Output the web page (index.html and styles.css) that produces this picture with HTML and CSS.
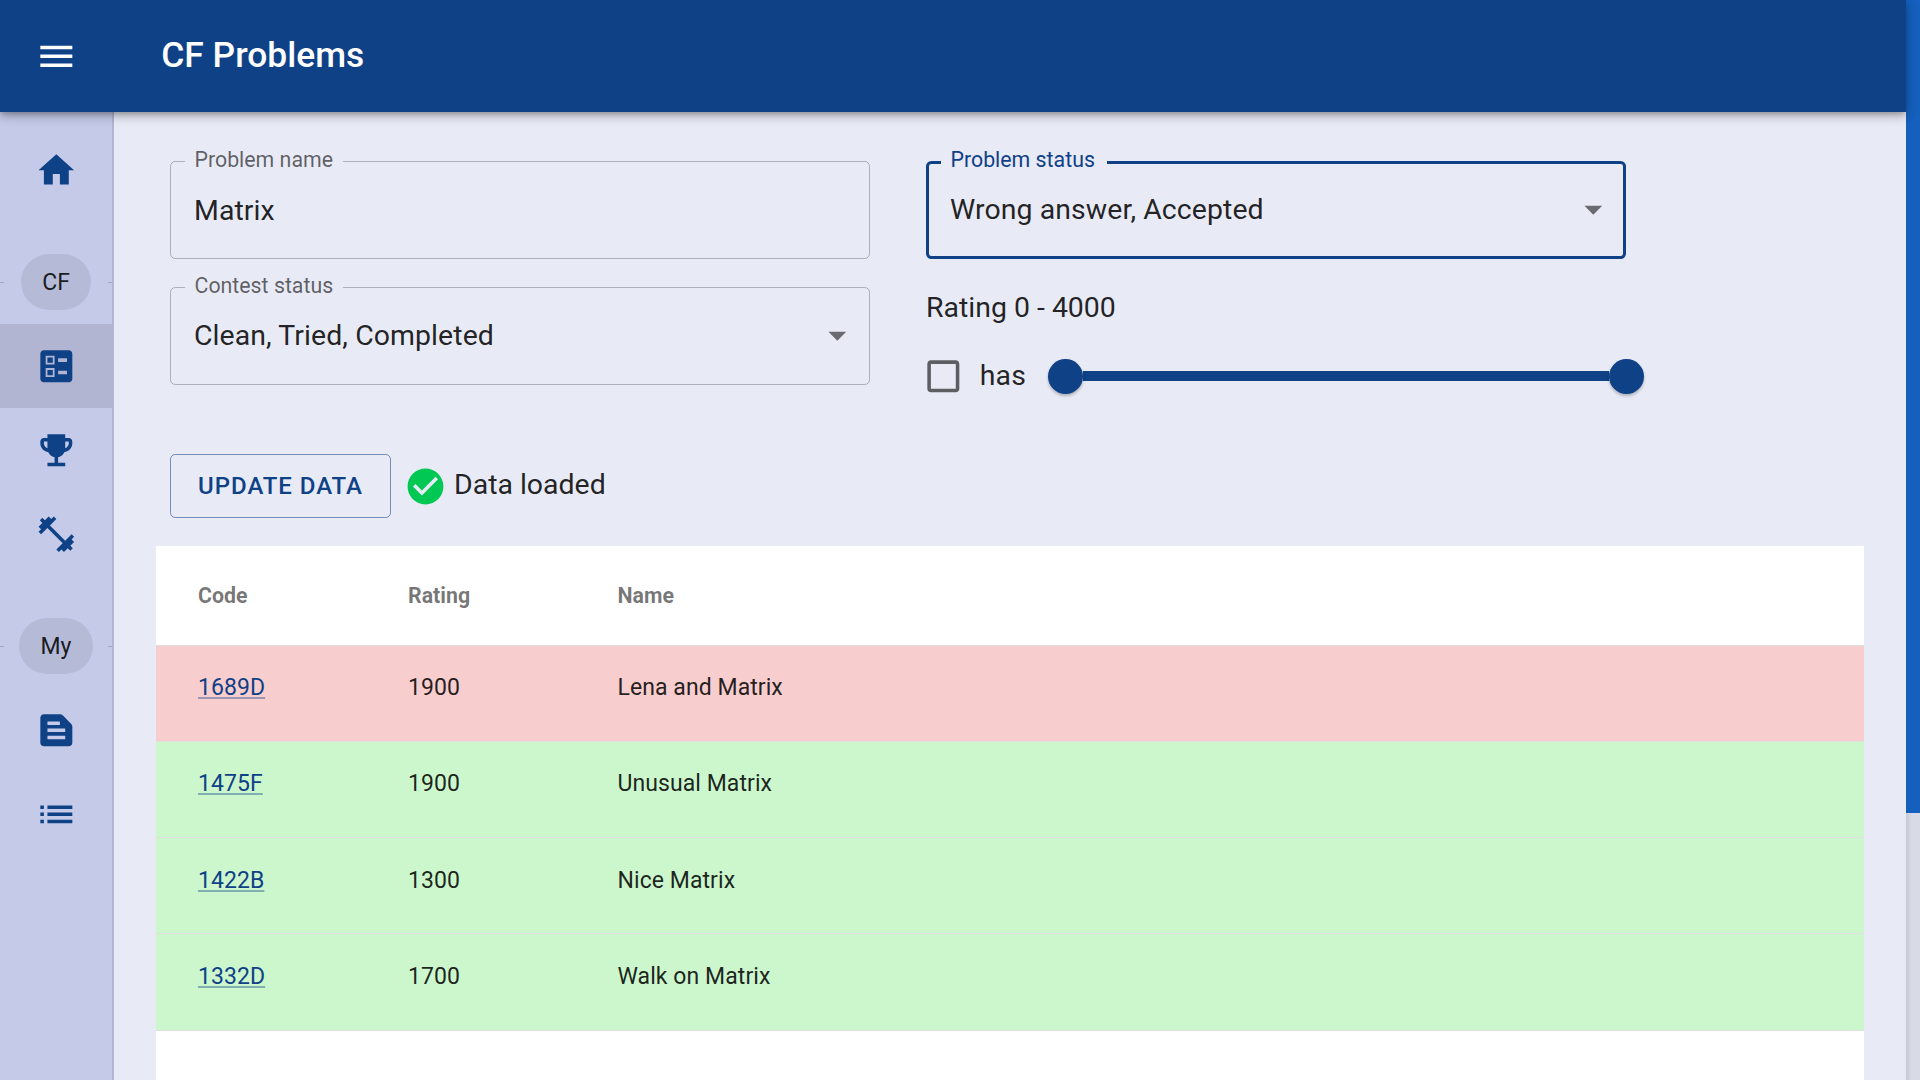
FILE: index.html
```html
<!DOCTYPE html>
<html lang="en">
<head>
<meta charset="utf-8">
<title>CF Problems</title>
<link rel="stylesheet" href="styles.css">
</head>
<body>
<div class="app">
  <div class="window">
    <header class="appbar">
      <svg class="icon menu-icon" viewBox="0 0 24 24"><path d="M3 18h18v-2H3v2zm0-5h18v-2H3v2zm0-7v2h18V6H3z"/></svg>
      <h1 class="title">CF Problems</h1>
    </header>
    <div class="body-row">
      <nav class="sidebar">
        <a class="nav-item"><svg class="icon" viewBox="0 0 24 24"><path d="M10 20v-6h4v6h5v-8h3L12 3 2 12h3v8z"/></svg></a>
        <div class="nav-divider"><span class="dash"></span><span class="chip chip-cf">CF</span><span class="dash"></span></div>
        <a class="nav-item selected"><svg class="icon" viewBox="0 0 24 24"><path fill-rule="evenodd" d="M13 9.5h5v-2h-5v2zm0 7h5v-2h-5v2zm6 4.5H5c-1.1 0-2-.9-2-2V5c0-1.1.9-2 2-2h14c1.1 0 2 .9 2 2v14c0 1.1-.9 2-2 2zM6 11h5V6H6v5zm1-4h3v3H7V7zM6 18h5v-5H6v5zm1-4h3v3H7v-3z"/></svg></a>
        <a class="nav-item"><svg class="icon" viewBox="0 0 24 24"><path d="M19 5h-2V3H7v2H5c-1.1 0-2 .9-2 2v1c0 2.55 1.92 4.63 4.39 4.94.63 1.5 1.98 2.63 3.61 2.96V19H7v2h10v-2h-4v-3.1c1.63-.33 2.98-1.46 3.61-2.96C19.08 12.63 21 10.55 21 8V7c0-1.1-.9-2-2-2zM5 8V7h2v3.82C5.84 10.4 5 9.3 5 8zm14 0c0 1.3-.84 2.4-2 2.82V7h2v1z"/></svg></a>
        <a class="nav-item"><svg class="icon" viewBox="0 0 24 24"><path d="M20.57 14.86L22 13.43 20.57 12 17 15.57 8.43 7 12 3.43 10.57 2 9.14 3.43 7.71 2 5.57 4.14 4.14 2.71 2.71 4.14l1.43 1.43L2 7.71l1.43 1.43L2 10.57 3.43 12 7 8.43 15.57 17 12 20.57 13.43 22l1.43-1.43L16.29 22l2.14-2.14 1.43 1.43 1.43-1.43-1.43-1.43L22 16.29z"/></svg></a>
        <div class="nav-divider"><span class="dash"></span><span class="chip chip-my">My</span><span class="dash"></span></div>
        <a class="nav-item"><svg class="icon" viewBox="0 0 24 24"><path d="M20.41 8.41l-4.83-4.83c-.37-.37-.88-.58-1.41-.58H5c-1.1 0-2 .9-2 2v14c0 1.1.9 2 2 2h14c1.1 0 2-.9 2-2V9.83c0-.53-.21-1.04-.59-1.42zM7 7h7v2H7V7zm10 10H7v-2h10v2zm0-4H7v-2h10v2z"/></svg></a>
        <a class="nav-item"><svg class="icon" viewBox="0 0 24 24"><path d="M3 13h2v-2H3v2zm0 4h2v-2H3v2zm0-8h2V7H3v2zm4 4h14v-2H7v2zm0 4h14v-2H7v2zM7 7v2h14V7H7z"/></svg></a>
      </nav>
      <main class="content">
        <section class="filters">
          <div class="col">
            <div class="field">
              <span class="field-label">Problem name</span>
              <span class="field-value text-input">Matrix</span>
            </div>
            <div class="field">
              <span class="field-label">Contest status</span>
              <span class="field-value">Clean, Tried, Completed</span>
              <svg class="arrow" viewBox="0 0 24 24"><path d="M7 10l5 5 5-5z"/></svg>
            </div>
          </div>
          <div class="col">
            <div class="field focused">
              <span class="field-label">Problem status</span>
              <span class="field-value">Wrong answer, Accepted</span>
              <svg class="arrow" viewBox="0 0 24 24"><path d="M7 10l5 5 5-5z"/></svg>
            </div>
            <div class="rating-label">Rating 0 - 4000</div>
            <div class="rating-row">
              <svg class="checkbox" viewBox="0 0 24 24"><path d="M19 5v14H5V5h14m0-2H5c-1.1 0-2 .9-2 2v14c0 1.1.9 2 2 2h14c1.1 0 2-.9 2-2V5c0-1.1-.9-2-2-2z"/></svg>
              <span class="has">has</span>
              <div class="slider"><span class="thumb"></span><span class="track"></span><span class="thumb"></span></div>
            </div>
          </div>
        </section>
        <section class="actions">
          <button class="update-btn">UPDATE DATA</button>
          <svg class="check" viewBox="0 0 24 24"><path d="M12 2C6.48 2 2 6.48 2 12s4.48 10 10 10 10-4.48 10-10S17.52 2 12 2zm-2 15l-5-5 1.41-1.41L10 14.17l7.59-7.59L19 8l-9 9z"/></svg>
          <span class="status-text">Data loaded</span>
        </section>
        <section class="table-card">
          <table class="table">
            <thead>
              <tr><th>Code</th><th>Rating</th><th>Name</th></tr>
            </thead>
            <tbody>
              <tr class="wrong"><td><a class="code-link">1689D</a></td><td>1900</td><td>Lena and Matrix</td></tr>
              <tr class="ok"><td><a class="code-link">1475F</a></td><td>1900</td><td>Unusual Matrix</td></tr>
              <tr class="ok"><td><a class="code-link">1422B</a></td><td>1300</td><td>Nice Matrix</td></tr>
              <tr class="ok"><td><a class="code-link">1332D</a></td><td>1700</td><td>Walk on Matrix</td></tr>
            </tbody>
          </table>
        </section>
      </main>
    </div>
  </div>
  <div class="scrollbar"><div class="scroll-thumb"></div></div>
</div>
</body>
</html>
```
FILE: styles.css
```css
* { box-sizing: border-box; }
html, body { margin: 0; height: 100%; overflow: hidden; }
body { font-family: Roboto, "Liberation Sans", sans-serif; color: rgba(0,0,0,.87); background: #e8eaf6; }
.app { display: flex; height: 1080px; overflow: hidden; }
.window { flex: 1; min-width: 0; display: flex; flex-direction: column; }

.appbar { height: 112px; flex: none; background: #0f4187; color: #fff; display: flex; align-items: center; position: relative; z-index: 2;
  box-shadow: 0 3px 6px -1px rgba(0,0,0,.25), 0 5px 10px 0 rgba(0,0,0,.14), 0 1px 14px 0 rgba(0,0,0,.1); }
.icon { width: 42.67px; height: 42.67px; flex: none; fill: #0f4187; display: block; }
.appbar .menu-icon { fill: #fff; margin-left: 35px; }
.title { margin: 0 0 0 83.5px; font-size: 35.4px; font-weight: 500; line-height: 1; }

.body-row { flex: 1; display: flex; min-height: 0; }
.sidebar { width: 114px; flex: none; background: #c5cae9; border-right: 2px solid rgba(0,0,0,.1); padding-top: 16px; }
.nav-item { height: 84px; display: flex; align-items: center; justify-content: center; }
.nav-item.selected { background: #b1b5d2; }
.nav-divider { height: 56px; margin: 42px 0 14px; display: flex; align-items: center; justify-content: space-between; }
.dash { width: 4px; height: 1px; background: rgba(0,0,0,.18); margin-top: 1px; }
.chip { height: 56px; border-radius: 28px; background: #b5bad6; display: flex; align-items: center; justify-content: center; font-size: 23px; }
.chip-cf { width: 70px; }
.chip-my { width: 74px; }

.content { flex: 1; min-width: 0; padding: 49px 42px 0; }
.filters { display: grid; grid-template-columns: 700px 700px; column-gap: 56px; padding-left: 14px; }
.col { display: flex; flex-direction: column; }
.field { height: 98px; position: relative; border: 1px solid rgba(0,0,0,.25); border-radius: 5.33px; display: flex; align-items: center; padding: 0 23px; }
.col .field + .field { margin-top: 28px; }
.field-label { position: absolute; left: 13.5px; top: -14px; padding: 0 10px; background: #e8eaf6; font-size: 21.33px; line-height: 24px; color: rgba(0,0,0,.6); }
.field-value { font-size: 28.44px; line-height: 1; letter-spacing: .08px; }
.text-input { margin-top: 2px; }
.arrow { position: absolute; right: 10.5px; top: 26px; width: 42.67px; height: 42.67px; fill: rgba(0,0,0,.54); }
.field.focused { border: 3px solid #0f4187; padding: 0 21px; }
.field.focused .field-label { color: #0f4187; left: 11.5px; top: -16px; padding-right: 12px; }
.field.focused .arrow { top: 24px; right: 8.5px; }

.rating-label { margin-top: 29px; font-size: 28.44px; line-height: 40px; }
.rating-row { display: flex; align-items: center; margin-top: 27px; height: 42px; }
.checkbox { width: 42.67px; height: 42.67px; margin-left: -4px; fill: rgba(0,0,0,.6); flex: none; }
.has { margin-left: 15px; font-size: 28.44px; letter-spacing: .27px; width: 68px; flex: none; line-height: 40px; }
.slider { display: flex; align-items: center; width: 595.5px; margin-left: .5px; flex: none; }
.thumb { width: 35px; height: 35px; border-radius: 50%; background: #0f4187; flex: none; box-shadow: 0 2px 3px rgba(0,0,0,.25); position: relative; z-index: 1; }
.track { flex: 1; height: 10px; background: #0f4187; }

.actions { display: flex; align-items: center; margin: 57px 0 28px 14px; height: 64px; }
.update-btn { width: 221px; height: 64px; background: transparent; border: 1px solid rgba(15,65,135,.55); border-radius: 5.33px; color: #0f4187; font: 500 24px Roboto, sans-serif; letter-spacing: .95px; padding: 0; }
.check { width: 43px; height: 43px; fill: #00c853; margin-left: 13px; flex: none; }
.status-text { margin-left: 7px; font-size: 28.44px; line-height: 38px; padding-bottom: 2px; }

.table-card { background: #fff; height: 534px; overflow: hidden; }
.table { width: 100%; border-collapse: collapse; table-layout: fixed; font-size: 23px; letter-spacing: .07px; }
.table th, .table td { text-align: left; padding: 0 0 0 42px; }
.table th:first-child, .table td:first-child { width: 210px; }
.table th:nth-child(2), .table td:nth-child(2) { width: 209.5px; }
.table th { height: 99px; font-size: 21.33px; letter-spacing: 0; color: rgba(0,0,0,.54); font-weight: 700; border-bottom: 1px solid #e0e0e0; }
.table td { height: 96.3px; padding-bottom: 11px; border-bottom: 1px solid #e0e0e0; }
.wrong { background: #f7cdcd; }
.ok { background: #ccf7cd; }
.code-link { color: #0f4187; text-decoration: underline; text-decoration-color: rgba(15,65,135,.4); }

.scrollbar { width: 14px; flex: none; background: linear-gradient(90deg, #c6c8d6, #d8dae6 40%); }
.scroll-thumb { height: 813px; background: #1560bd; }
```
